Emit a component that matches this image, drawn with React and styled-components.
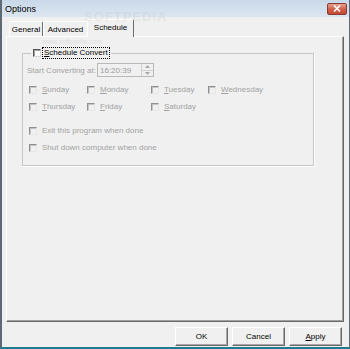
import styled, { createGlobalStyle } from "styled-components";

const GlobalStyle = createGlobalStyle`
  html, body {
    margin: 0;
    padding: 0;
    background: #fff;
  }
  body {
    font-family: "Liberation Sans", Arial, sans-serif;
  }
`;

const Window = styled.div`
  position: relative;
  width: 350px;
  height: 349px;
  box-sizing: border-box;
  display: flex;
  flex-direction: column;
  background: #f0f0f0;
  border-left: 2px solid #5e6a76;
  border-right: 1px solid #5e6a76;
  border-bottom: 2px solid #1d7c92;
  overflow: hidden;
`;

const TitleBar = styled.div`
  height: 17px;
  flex-shrink: 0;
  display: flex;
  align-items: center;
  justify-content: space-between;
  padding: 0 2px 0 3px;
  background: linear-gradient(#c9d8e8, #dce6f1);
  font-size: 9px;
  color: #000;
`;

const CloseButton = styled.div`
  width: 20px;
  height: 12px;
  box-sizing: border-box;
  display: flex;
  align-items: center;
  justify-content: center;
  border: 1px solid #8a3a2e;
  border-radius: 2px;
  background: linear-gradient(#e9a391, #d0624c 50%, #c44a33);
`;

const Body = styled.div`
  flex: 1;
  display: flex;
  flex-direction: column;
  padding: 0 5px 0 4px;
`;

const TabRow = styled.div`
  height: 19px;
  display: flex;
  align-items: flex-end;
  padding-left: 3px;
`;

const Tab = styled.div`
  position: relative;
  z-index: ${(p) => (p.$active ? 2 : 1)};
  box-sizing: border-box;
  width: ${(p) => p.$w}px;
  height: ${(p) => (p.$active ? 18 : 15)}px;
  margin-left: ${(p) => (p.$active ? -1 : 0)}px;
  margin-bottom: ${(p) => (p.$active ? -1 : 0)}px;
  display: flex;
  align-items: center;
  justify-content: center;
  padding-bottom: ${(p) => (p.$active ? 2 : 0)}px;
  border: 1px solid;
  border-bottom: none;
  border-color: #ffffff #6d6d6d #6d6d6d #ffffff;
  border-radius: 2px 2px 0 0;
  background: #f0f0f0;
  font-size: 8px;
  color: #000;
`;

const Panel = styled.div`
  position: relative;
  z-index: 1;
  box-sizing: border-box;
  height: 286px;
  border: 1px solid;
  border-color: #ffffff #696969 #696969 #ffffff;
  box-shadow: inset -1px -1px 0 #a0a0a0;
  padding: 10px 0 0 15px;
`;

const GroupBox = styled.fieldset`
  box-sizing: border-box;
  width: 292px;
  height: 119px;
  margin: 0;
  padding: 0 4px;
  border: 1px solid #c6c6c6;
  box-shadow: 1px 1px 0 #ffffff;
  font-size: 8px;
`;

const Legend = styled.legend`
  margin-left: 4px;
  padding: 0 2px;
  display: flex;
  align-items: center;
  gap: 2px;
  height: 12px;
`;

const FocusLabel = styled.span`
  line-height: 10px;
  padding: 0 1px;
  outline: 1px dotted #000;
  color: #000;
`;

const Box = styled.span`
  box-sizing: border-box;
  width: 8px;
  height: 8px;
  flex-shrink: 0;
  border: 1px solid;
  border-color: ${(p) =>
    p.$enabled ? "#555 #d8d8d8 #d8d8d8 #555" : "#909090 #e6e6e6 #e6e6e6 #909090"};
  background: ${(p) => (p.$enabled ? "#fff" : "#f0f0f0")};
  box-shadow: inset 1px 1px 0 ${(p) => (p.$enabled ? "#a0a0a0" : "#c4c4c4")};
`;

const TimeRow = styled.div`
  display: flex;
  align-items: center;
  margin-top: 4px;
  height: 14px;
`;

const Muted = styled.span`
  color: #a2a2a2;
  white-space: nowrap;
`;

const TimeLabel = styled(Muted)`
  width: 70px;
`;

const TimeInput = styled.div`
  box-sizing: border-box;
  width: 57px;
  height: 14px;
  display: flex;
  align-items: center;
  justify-content: space-between;
  border: 1px solid #b9b9b9;
  background: #f0f0f0;
  padding-left: 2px;
  color: #9c9c9c;
`;

const Spin = styled.div`
  width: 11px;
  height: 12px;
  display: flex;
  flex-direction: column;
  border-left: 1px solid #d0d0d0;
`;

const SpinHalf = styled.div`
  flex: 1;
  display: flex;
  align-items: center;
  justify-content: center;
  border-bottom: ${(p) => (p.$top ? "1px solid #d0d0d0" : "none")};
`;

const DayGrid = styled.div`
  display: grid;
  grid-template-columns: 58px 64px 57px auto;
  margin: 4px 0 0 2px;
`;

const CheckItem = styled.div`
  display: flex;
  align-items: center;
  gap: 5px;
  height: 17px;
`;

const OptionList = styled.div`
  margin: 7px 0 0 2px;
`;

const Footer = styled.div`
  display: flex;
  justify-content: flex-end;
  gap: 4px;
  padding: 5px 2px 0 0;
`;

const Button = styled.div`
  box-sizing: border-box;
  width: 53px;
  height: 19px;
  display: flex;
  align-items: center;
  justify-content: center;
  border: 1px solid;
  border-color: #ffffff #6a6a6a #6a6a6a #ffffff;
  box-shadow: inset -1px -1px 0 #a8a8a8;
  background: #f0f0f0;
  font-size: 8px;
  color: #000;
`;

const Watermark = styled.div`
  position: absolute;
  left: ${(p) => p.$x}px;
  top: ${(p) => p.$y}px;
  font-size: ${(p) => p.$size}px;
  font-weight: ${(p) => (p.$bold ? 700 : 400)};
  letter-spacing: ${(p) => (p.$bold ? 1 : 0)}px;
  color: #b8bcc0;
  opacity: ${(p) => (p.$bold ? 0.22 : 0.35)};
  pointer-events: none;
  z-index: 5;
`;

const Key = styled.u`
  text-decoration-thickness: 1px;
`;

function Check({ label, keyChar }) {
  return (
    <CheckItem>
      <Box />
      <Muted>
        {keyChar ? (
          <>
            <Key>{label[0]}</Key>
            {label.slice(1)}
          </>
        ) : (
          label
        )}
      </Muted>
    </CheckItem>
  );
}

const days = ["Sunday", "Monday", "Tuesday", "Wednesday", "Thursday", "Friday", "Saturday"];

export default function App() {
  return (
    <>
      <GlobalStyle />
      <Window>
        <TitleBar>
          <span>Options</span>
          <CloseButton>
            <svg width="8" height="7" viewBox="0 0 8 7">
              <path d="M1 0.5 L7 6.5 M7 0.5 L1 6.5" stroke="#fff" strokeWidth="1.6" />
            </svg>
          </CloseButton>
        </TitleBar>
        <Body>
          <TabRow>
            <Tab $w={34}>General</Tab>
            <Tab $w={45}>Advanced</Tab>
            <Tab $w={47} $active>
              Schedule
            </Tab>
          </TabRow>
          <Panel>
            <GroupBox>
              <Legend>
                <Box $enabled />
                <FocusLabel>
                  <Key>S</Key>chedule Convert
                </FocusLabel>
              </Legend>
              <TimeRow>
                <TimeLabel>Start Converting at:</TimeLabel>
                <TimeInput>
                  <span>16:20:39</span>
                  <Spin>
                    <SpinHalf $top>
                      <svg width="5" height="3" viewBox="0 0 5 3">
                        <path d="M0 3 L2.5 0 L5 3 Z" fill="#a8a8a8" />
                      </svg>
                    </SpinHalf>
                    <SpinHalf>
                      <svg width="5" height="3" viewBox="0 0 5 3">
                        <path d="M0 0 L2.5 3 L5 0 Z" fill="#a8a8a8" />
                      </svg>
                    </SpinHalf>
                  </Spin>
                </TimeInput>
              </TimeRow>
              <DayGrid>
                {days.map((d) => (
                  <Check key={d} label={d} keyChar />
                ))}
              </DayGrid>
              <OptionList>
                <Check label="Exit this program when done" />
                <Check label="Shut down computer when done" />
              </OptionList>
            </GroupBox>
          </Panel>
          <Footer>
            <Button>OK</Button>
            <Button>Cancel</Button>
            <Button>
              <span>
                <Key>A</Key>pply
              </span>
            </Button>
          </Footer>
        </Body>
        <Watermark $x={82} $y={9} $size={13} $bold>
          SOFTPEDIA
        </Watermark>
        <Watermark $x={40} $y={38} $size={7}>
          www.softpedia.com
        </Watermark>
      </Window>
    </>
  );
}
